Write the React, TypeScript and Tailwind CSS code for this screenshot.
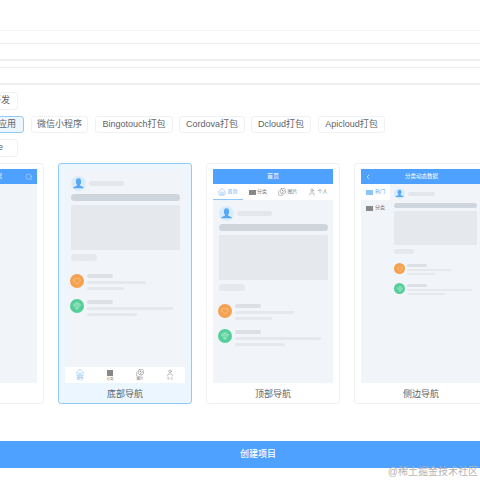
import { Heart, Gem, Home, Images, User, Search, ChevronLeft } from "lucide-react";

const FONT = "font-['Liberation_Sans','Noto_Sans_CJK_SC',sans-serif]";

const Avatar = ({ small }: { small?: boolean }) => (
  <svg viewBox="0 0 30 30" className={small ? "w-[11px] h-[11px] shrink-0" : "w-[15px] h-[15px] shrink-0"}>
    <circle cx="15" cy="15" r="15" fill="#d9ecfd" />
    <ellipse cx="15" cy="11.5" rx="5.2" ry="6.8" fill="#57a8f5" />
    <path d="M12.5 16h5l.5 3.2 6 2.6c1.400.7 1.800 1.600 1.800 2.900H4.200c0-1.300.4-2.200 1.800-2.900l6-2.600z" fill="#57a8f5" />
  </svg>
);

const HeartDot = ({ small }: { small?: boolean }) => (
  <div className={`rounded-full bg-[#f4a24f] flex items-center justify-center shrink-0 ${small ? "w-[11px] h-[11px]" : "w-[14px] h-[14px]"}`}>
    <Heart size={small ? 6 : 8} strokeWidth={1.6} className="text-[#fbdcb8]" />
  </div>
);

const GemDot = ({ small }: { small?: boolean }) => (
  <div className={`rounded-full bg-[#55cf99] flex items-center justify-center shrink-0 ${small ? "w-[11px] h-[11px]" : "w-[14px] h-[14px]"}`}>
    <Gem size={small ? 6 : 8} strokeWidth={1.6} className="text-[#c5f0dc]" />
  </div>
);

const Feed = () => (
  <div className="flex flex-col px-[6px]">
    <div className="flex items-center">
      <Avatar />
      <div className="ml-[3px] w-[35px] h-[5px] rounded-full bg-[#e3e6ea]" />
    </div>
    <div className="mt-[3px] w-[109px] h-[7px] rounded-full bg-[#cfd5dc]" />
    <div className="mt-[4px] w-[109px] h-[45px] rounded-[1px] bg-[#e5e8ec]" />
    <div className="mt-[4px] w-[26px] h-[7px] rounded-full bg-[#e5e8ec]" />
    <div className="mt-[13px] flex">
      <div className="-ml-[1px]"><HeartDot /></div>
      <div className="ml-[3px] flex flex-col">
        <div className="w-[26px] h-[4px] rounded-full bg-[#dcdfe3]" />
        <div className="mt-[3px] w-[59px] h-[3px] rounded-full bg-[#e5e8ec]" />
        <div className="mt-[3px] w-[37px] h-[3px] rounded-full bg-[#e5e8ec]" />
      </div>
    </div>
    <div className="mt-[9px] flex">
      <div className="-ml-[1px]"><GemDot /></div>
      <div className="ml-[3px] mt-[1px] flex flex-col">
        <div className="w-[26px] h-[4px] rounded-full bg-[#dcdfe3]" />
        <div className="mt-[3px] w-[86px] h-[3px] rounded-full bg-[#e5e8ec]" />
        <div className="mt-[3px] w-[50px] h-[3px] rounded-full bg-[#e5e8ec]" />
      </div>
    </div>
  </div>
);

const SideFeed = () => (
  <div className="flex flex-col pl-[4px] pt-[4px]">
    <div className="flex items-center">
      <Avatar small />
      <div className="ml-[3px] w-[27px] h-[4px] rounded-full bg-[#e3e6ea]" />
    </div>
    <div className="mt-[4px] w-[83px] h-[5px] rounded-full bg-[#cfd5dc]" />
    <div className="mt-[3px] w-[83px] h-[34px] rounded-[1px] bg-[#e5e8ec]" />
    <div className="mt-[4px] w-[20px] h-[5px] rounded-full bg-[#e5e8ec]" />
    <div className="mt-[9px] flex">
      <HeartDot small />
      <div className="ml-[2px] mt-[1px] flex flex-col">
        <div className="w-[20px] h-[3px] rounded-full bg-[#dcdfe3]" />
        <div className="mt-[2px] w-[44px] h-[2px] rounded-full bg-[#e5e8ec]" />
        <div className="mt-[2px] w-[28px] h-[2px] rounded-full bg-[#e5e8ec]" />
      </div>
    </div>
    <div className="mt-[8px] flex">
      <GemDot small />
      <div className="ml-[2px] mt-[1px] flex flex-col">
        <div className="w-[20px] h-[3px] rounded-full bg-[#dcdfe3]" />
        <div className="mt-[2px] w-[65px] h-[2px] rounded-full bg-[#e5e8ec]" />
        <div className="mt-[2px] w-[38px] h-[2px] rounded-full bg-[#e5e8ec]" />
      </div>
    </div>
  </div>
);

const TAG = "h-[17.5px] flex items-center border border-[#f0f1f3] rounded-[3px] text-[9px] text-[#606266] whitespace-nowrap";

const Card = ({ label, active, children }: { label: string; active?: boolean; children: React.ReactNode }) => (
  <div className={`w-[134px] h-[241px] shrink-0 flex flex-col rounded-[3px] border px-[6px] pt-[5px] ${active ? "border-[#94c9fc] bg-[#ecf6fe]" : "border-[#f1f1f3] bg-white"}`}>
    <div className="w-[120px] h-[214px] shrink-0 bg-[#f1f4f8] flex flex-col overflow-hidden">{children}</div>
    <div className="flex-1 flex items-center justify-center pt-[3px] text-[9px] text-[#606266]">{label}</div>
  </div>
);

const TopTab = ({ text, active, children }: { text: string; active?: boolean; children: React.ReactNode }) => (
  <div className={`w-[30px] h-[16px] flex items-center justify-center gap-[1px] text-[5px] ${active ? "border-b border-[#8fc5fb] text-[#57a8f5]" : "text-[#777]"}`}>
    {children}
    <span>{text}</span>
  </div>
);

const BottomTab = ({ text, active, children }: { text: string; active?: boolean; children: React.ReactNode }) => (
  <div className={`w-[30px] flex flex-col items-center text-[3.500px] leading-[4px] ${active ? "text-[#57a8f5]" : "text-[#777]"}`}>
    {children}
    <span>{text}</span>
  </div>
);

export default function App() {
  return (
    <div className={`relative w-[480px] h-[480px] overflow-hidden bg-white ${FONT}`}>
      <div className="-ml-[100px] w-[716px] pt-[30px]">
        <div className="h-[14px] border-t border-b border-t-[#f6f6f6] border-b-[#ececec]" />
        <div className="h-[17px] border-b-2 border-b-[#eeeeee]" />
        <div className="mt-[6px] h-[18px] border-t border-b-2 border-t-[#ececec] border-b-[#eeeeee]" />

        <div className="mt-[7px] flex">
          <div className={`${TAG} w-[118px] justify-end pr-[7px]`}>混合开发</div>
        </div>
        <div className="mt-[6px] flex">
          <div className={`${TAG} w-[124px] justify-end pr-[7px] !border-[#94c9fc] bg-[#ecf6fe]`}>移动应用</div>
          <div className={`${TAG} w-[57px] ml-[7px] justify-center`}>微信小程序</div>
          <div className={`${TAG} w-[78px] ml-[7px] justify-center`}>Bingotouch打包</div>
          <div className={`${TAG} w-[66px] ml-[6px] justify-center`}>Cordova打包</div>
          <div className={`${TAG} w-[60px] ml-[6px] justify-center`}>Dcloud打包</div>
          <div className={`${TAG} w-[67px] ml-[7px] justify-center`}>Apicloud打包</div>
        </div>
        <div className="mt-[6px] flex">
          <div className={`${TAG} w-[118px] justify-end pr-[14px]`}>Native</div>
        </div>

        <div className="mt-[6.5px] ml-[10px] flex gap-[14px]">
          <Card label="搜索导航">
            <div className="h-[15px] bg-[#4ea1ff] flex items-center justify-end pr-[4px] gap-[23px] text-[5.500px] text-white">
              <span>顶部搜索分类动态数据</span>
              <Search size={8} strokeWidth={1.4} className="text-[#cfe6ff]" />
            </div>
          </Card>

          <Card label="底部导航" active>
            <div className="pt-[7px] flex-1"><Feed /></div>
            <div className="h-[16px] bg-white flex items-center">
              <BottomTab text="首页" active><Home size={8} strokeWidth={1.4} /></BottomTab>
              <BottomTab text="分类"><div className="w-[6px] h-[6px] my-[1px] bg-[#888]" /></BottomTab>
              <BottomTab text="图片"><Images size={8} strokeWidth={1.4} /></BottomTab>
              <BottomTab text="个人"><User size={8} strokeWidth={1.4} /></BottomTab>
            </div>
          </Card>

          <Card label="顶部导航">
            <div className="h-[15px] bg-[#4ea1ff] flex items-center justify-center text-[6px] text-white">首页</div>
            <div className="h-[16px] bg-white flex">
              <TopTab text="首页" active><Home size={8} strokeWidth={1.4} /></TopTab>
              <TopTab text="分类"><div className="w-[7px] h-[5px] bg-[#888]" /></TopTab>
              <TopTab text="图片"><Images size={8} strokeWidth={1.4} /></TopTab>
              <TopTab text="个人"><User size={8} strokeWidth={1.4} /></TopTab>
            </div>
            <div className="pt-[6px]"><Feed /></div>
          </Card>

          <Card label="侧边导航">
            <div className="h-[15px] bg-[#4ea1ff] flex items-center text-[5.500px] text-white">
              <ChevronLeft size={8} strokeWidth={1.8} className="ml-[3px] text-white" />
              <span className="ml-[33px]">分类动态数据</span>
            </div>
            <div className="flex flex-1">
              <div className="w-[29px] shrink-0 flex flex-col text-[5px] text-[#777]">
                <div className="h-[16px] bg-white flex items-center justify-center gap-[2px] text-[#57a8f5]">
                  <div className="w-[7px] h-[5px] bg-[#8cc3f8]" />
                  <span>热门</span>
                </div>
                <div className="h-[16px] flex items-center justify-center gap-[2px]">
                  <div className="w-[7px] h-[5px] bg-[#888]" />
                  <span>分类</span>
                </div>
              </div>
              <SideFeed />
            </div>
          </Card>
        </div>

        <div className="mt-[37px] h-[27px] bg-[#4ea1ff] flex items-center justify-center text-[9px] font-medium text-white">创建项目</div>
      </div>
      <div className="absolute right-[2px] top-[465px] text-[10px] leading-[14px] text-[#b4b4b4] whitespace-nowrap">@稀土掘金技术社区</div>
    </div>
  );
}
